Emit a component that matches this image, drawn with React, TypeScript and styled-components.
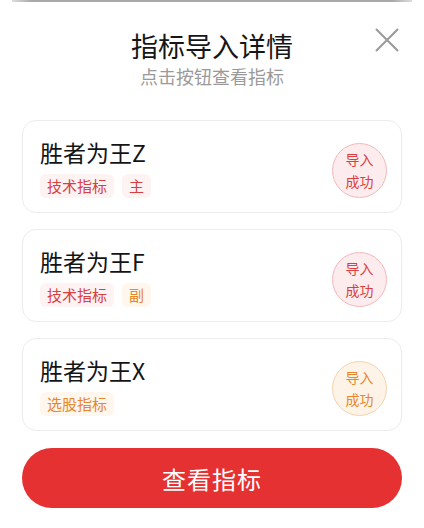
import styled, { createGlobalStyle } from "styled-components";

const Global = createGlobalStyle`
  html, body {
    margin: 0;
    padding: 0;
    background: #fff;
    font-family: "Noto Sans CJK SC", "Noto Sans", sans-serif;
  }
`;

const Sheet = styled.div`
  width: 424px;
  height: 528px;
  display: flex;
  flex-direction: column;
  padding: 0 22px;
  box-sizing: border-box;
  position: relative;
  overflow: hidden;
`;

const TopEdge = styled.div`
  height: 2px;
  margin: 0 -10px;
  background: linear-gradient(90deg, #ddd, #a8a8a8 5%, #a8a8a8 95%, #ddd);
`;

const Header = styled.div`
  position: relative;
  display: flex;
  flex-direction: column;
  align-items: center;
  padding-top: 25px;
`;

const Title = styled.div`
  font-size: 27px;
  line-height: 38px;
  color: #161616;
  font-weight: 400;
`;

const Sub = styled.div`
  font-size: 18px;
  line-height: 24px;
  margin-top: -1px;
  color: #9a9a9a;
`;

const Close = styled.div`
  position: absolute;
  right: 2px;
  top: 25px;
  width: 26px;
  height: 26px;
  cursor: pointer;
`;

const List = styled.div`
  display: flex;
  flex-direction: column;
  gap: 16px;
  margin-top: 32px;
`;

const Card = styled.div`
  height: 93px;
  box-sizing: border-box;
  border: 1px solid #ececec;
  border-radius: 14px;
  padding: 0 14px 0 17px;
  display: flex;
  align-items: center;
  justify-content: space-between;
`;

const Info = styled.div`
  display: flex;
  flex-direction: column;
  align-self: flex-start;
  padding-top: 16px;
`;

const Name = styled.div`
  font-size: 23px;
  line-height: 30px;
  color: #141414;
`;

const Tags = styled.div`
  display: flex;
  gap: 8px;
  margin-top: 7px;
`;

const Tag = styled.span<{ $tone: "red" | "orange" }>`
  font-size: 15px;
  line-height: 24px;
  padding: 0 7px;
  border-radius: 6px;
  color: ${(p) => (p.$tone === "red" ? "#d8403f" : "#e7862b")};
  background: ${(p) => (p.$tone === "red" ? "#fdf3f3" : "#fff7ee")};
`;

const Badge = styled.div<{ $tone: "red" | "orange" }>`
  width: 55px;
  height: 55px;
  box-sizing: border-box;
  border-radius: 50%;
  margin-top: 7px;
  display: flex;
  align-items: center;
  justify-content: center;
  text-align: center;
  font-size: 14px;
  line-height: 22px;
  color: ${(p) => (p.$tone === "red" ? "#d8403f" : "#e7862b")};
  background: ${(p) => (p.$tone === "red" ? "#fdeced" : "#fef3e7")};
  border: 1px solid ${(p) => (p.$tone === "red" ? "#f2b9bb" : "#f6d2ad")};
`;

const Button = styled.div`
  margin-top: 17px;
  height: 60px;
  border-radius: 30px;
  background: #e63132;
  color: #fff;
  font-size: 24px;
  display: flex;
  align-items: center;
  justify-content: center;
  letter-spacing: 1px;
  cursor: pointer;
`;

type Tone = "red" | "orange";

type Item = {
  name: string;
  tags: { text: string; tone: Tone }[];
  tone: Tone;
};

const items: Item[] = [
  {
    name: "胜者为王Z",
    tags: [
      { text: "技术指标", tone: "red" },
      { text: "主", tone: "red" },
    ],
    tone: "red",
  },
  {
    name: "胜者为王F",
    tags: [
      { text: "技术指标", tone: "red" },
      { text: "副", tone: "orange" },
    ],
    tone: "red",
  },
  {
    name: "胜者为王X",
    tags: [{ text: "选股指标", tone: "orange" }],
    tone: "orange",
  },
];

export default function App() {
  return (
    <Sheet>
      <Global />
      <TopEdge />
      <Header>
        <Title>指标导入详情</Title>
        <Sub>点击按钮查看指标</Sub>
        <Close>
          <svg width="26" height="26" viewBox="0 0 26 26">
            <path d="M2 2L24 24M24 2L2 24" stroke="#999" strokeWidth="2" fill="none" />
          </svg>
        </Close>
      </Header>
      <List>
        {items.map((it) => (
          <Card key={it.name}>
            <Info>
              <Name>{it.name}</Name>
              <Tags>
                {it.tags.map((t) => (
                  <Tag key={t.text} $tone={t.tone}>
                    {t.text}
                  </Tag>
                ))}
              </Tags>
            </Info>
            <Badge $tone={it.tone}>
              导入
              <br />
              成功
            </Badge>
          </Card>
        ))}
      </List>
      <Button>查看指标</Button>
    </Sheet>
  );
}
